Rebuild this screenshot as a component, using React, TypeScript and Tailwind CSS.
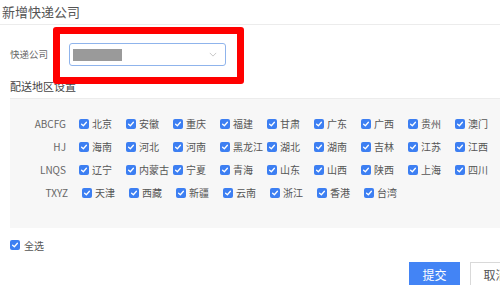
import React from 'react';

const REGIONS: { label: string; items: string[]; shift?: boolean }[] = [
  { label: 'ABCFG', items: ['北京', '安徽', '重庆', '福建', '甘肃', '广东', '广西', '贵州', '澳门'] },
  { label: 'HJ', items: ['海南', '河北', '河南', '黑龙江', '湖北', '湖南', '吉林', '江苏', '江西'] },
  { label: 'LNQS', items: ['辽宁', '内蒙古', '宁夏', '青海', '山东', '山西', '陕西', '上海', '四川'] },
  { label: 'TXYZ', items: ['天津', '西藏', '新疆', '云南', '浙江', '香港', '台湾'], shift: true },
];

function Check() {
  return (
    <span className="w-[10px] h-[10px] shrink-0 rounded-[2px] bg-[#3d7ff2] flex items-center justify-center">
      <svg viewBox="0 0 10 10" className="w-[8px] h-[8px]" fill="none" stroke="#fff" strokeWidth="1.6" strokeLinecap="round" strokeLinejoin="round">
        <path d="M2 5.2 L4.2 7.2 L8 2.8" />
      </svg>
    </span>
  );
}

export default function App() {
  return (
    <div
      className="relative w-[500px] h-[285px] overflow-hidden bg-white"
      style={{ fontFamily: '"Noto Sans CJK SC", "Noto Sans", sans-serif' }}
    >
      <div className="w-[525px]">
        {/* Header */}
        <div className="h-[25px] px-[2px] flex items-center border-b border-[#ececec] text-[13px] text-[#555]">
          新增快递公司
        </div>

        {/* Company select */}
        <div className="flex items-center pt-[18px] pl-[10px]">
          <span className="w-[59px] text-[9.5px] text-[#666]">快递公司</span>
          <div className="w-[157px] h-[23px] border border-[#8fb4ec] rounded-[3px] flex items-center justify-between pl-[3px] pr-[8px]">
            <span className="w-[49px] h-[12px] bg-[#9a9a9a]" />
            <svg viewBox="0 0 10 6" className="w-[8px] h-[5px]" fill="none" stroke="#bbb" strokeWidth="1">
              <path d="M1 1 L5 5 L9 1" />
            </svg>
          </div>
        </div>

        {/* Section title */}
        <div className="ml-[10px] mt-[13px] pb-[5px] border-b border-[#ececec] text-[11px] leading-[14px] text-[#444]">
          配送地区设置
        </div>

        {/* Regions panel */}
        <div className="ml-[10px] bg-[#f7f7f7] pt-[13px] pb-[24px]">
          {REGIONS.map((row) => (
            <div key={row.label} className={`flex items-center h-[23px] ${row.shift ? 'pl-[2px]' : ''}`}>
              <span className="w-[56px] text-right text-[10px] text-[#666]">{row.label}</span>
              <div className={`flex ${row.shift ? 'ml-[14px]' : 'ml-[13px]'}`}>
                {row.items.map((item) => (
                  <div key={item} className="w-[47px] flex items-center gap-[3px] text-[10px] text-[#555] whitespace-nowrap">
                    <Check />
                    <span>{item}</span>
                  </div>
                ))}
              </div>
            </div>
          ))}
        </div>

        {/* Select all */}
        <div className="mt-[10px] ml-[10px] h-[14px] flex items-center gap-[4px] text-[10px] text-[#555]">
          <Check />
          <span>全选</span>
        </div>

        {/* Actions */}
        <div className="mt-[10px] flex justify-end gap-[10px] pr-[4px]">
          <button type="button" className="w-[51px] h-[26px] bg-[#4384f5] text-white text-[12px]">
            提交
          </button>
          <button type="button" className="w-[51px] h-[26px] bg-white border border-[#d9d9d9] text-[#555] text-[12px]">
            取消
          </button>
        </div>
      </div>

      {/* Red annotation frame */}
      <div className="absolute left-[53px] top-[27px] w-[191px] h-[57px] border-[7px] border-[#ff0000] rounded-[3px]" />
    </div>
  );
}
